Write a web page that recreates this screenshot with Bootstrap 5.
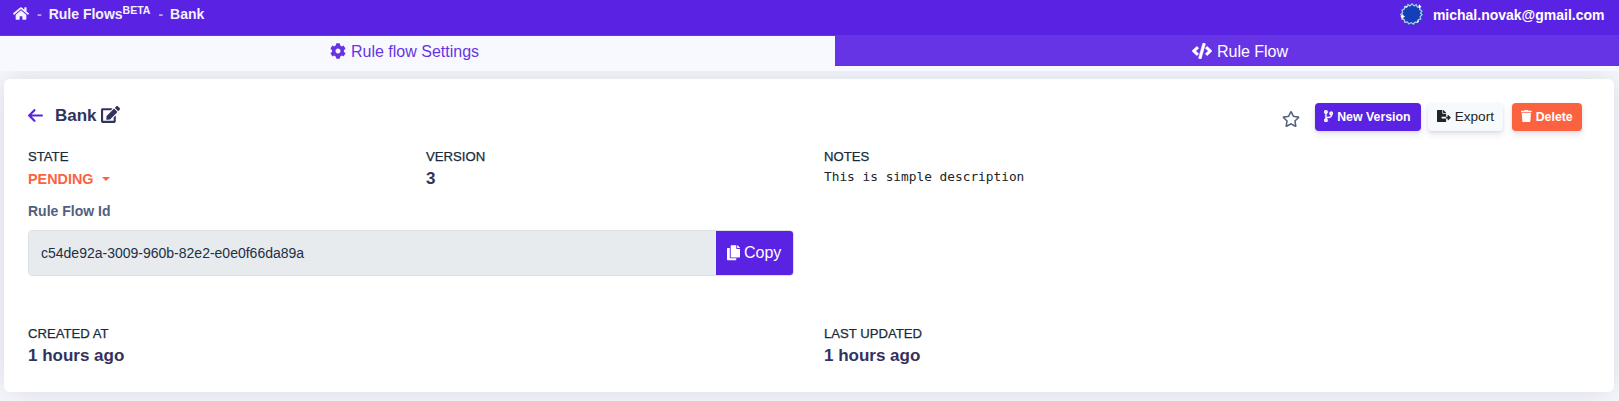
<!DOCTYPE html>
<html lang="en">
<head>
<meta charset="utf-8">
<meta name="viewport" content="width=device-width, initial-scale=1">
<title>Rule Flows - Bank</title>
<link href="https://cdn.jsdelivr.net/npm/bootstrap@5.3.0/dist/css/bootstrap.min.css" rel="stylesheet">
<style>
:root{--brand:#5a22e3;--brand-soft:#6734e5;--ink:#32325d;--danger:#fb6340}
body{font-family:"Liberation Sans",Arial,sans-serif;font-size:16px;color:#212f45;background:#f8f9fe;height:401px;overflow:hidden}
svg{fill:currentColor;display:block;flex:none}
.topbar{height:35px;background:var(--brand);padding:0 14.5px 0 13px;font-size:14px;font-weight:700;line-height:28px}
.topbar a{color:#f3f1fd;text-decoration:none}
.topbar sup{font-size:10.5px;line-height:0;top:-5px;vertical-align:baseline}
.crumb-sep{color:#b3a3ee;margin:0 7px 0 8px}
.home-icon{margin-top:6px}
.tabstrip{height:36px;background:#f8f9fe;position:relative;z-index:1}
.tabstrip a{height:31px;line-height:31px;color:var(--brand-soft);text-decoration:none;border-top:1px solid var(--brand-soft);gap:5px}
.tabstrip svg{margin-top:7px}
.tabstrip .tab-settings{width:835px;padding-right:26px}
.tabstrip .tab-flow{background:var(--brand-soft);color:#fff;padding-left:26px}
.flow-card{margin:8px 5px 0 4px;height:313px;border:0;border-radius:6px;padding:24px;box-shadow:0 0 32px rgba(80,84,105,.2)}
.flow-card .row{--bs-gutter-x:30px}
.title-line{height:28px}
.title-line h1{font-size:17px;font-weight:700;color:var(--ink);line-height:20px;margin:1px 5px 0 12px}
.btn-tool{height:28px;border:0;border-radius:4px;padding:0 9px;font-size:12.35px;font-weight:700;line-height:28px;box-shadow:0 4px 6px rgba(50,50,93,.11),0 1px 3px rgba(0,0,0,.08)}
.btn-tool svg{margin:7px 4px 0 0}
.btn-brand,.btn-brand:hover{background:var(--brand);color:#fff}
.btn-export{background:#f7fafc;color:#212529;font-size:13.6px;font-weight:400}
.btn-delete{background:var(--danger);color:#fff}
.cap-label{font-size:13.15px;line-height:20px;color:#172b3d;-webkit-text-stroke:.25px}
.strong-val{font-size:17px;font-weight:700;color:var(--ink);line-height:24px}
.state-pick{font-size:14.4px;font-weight:700;color:var(--danger);line-height:24px}
.state-pick::after{border-top-width:4px;border-left-width:4px;border-right-width:4px;margin-left:8px;vertical-align:3px}
.note-text{font-family:"DejaVu Sans Mono",monospace;font-size:12.8px;line-height:20px;color:#212529}
.id-label{font-size:14px;font-weight:700;color:#525f7f;line-height:20px}
.id-group{height:46px;border:1px solid #dbe0e5;border-radius:4px;overflow:hidden}
.id-group .form-control{background:#e7ebee;border:0;border-radius:0;font-size:14px;color:#212f45;padding:0 12px}
.id-group .btn{width:77px;border:0;border-radius:0;font-size:16px;line-height:44px;padding:0 0 0 11px}
</style>
</head>
<body>
<header class="topbar d-flex justify-content-between">
  <nav class="d-flex">
    <a href="#"><svg class="home-icon" width="16" height="15" viewBox="0 0 576 512"><path d="M280.37 148.26L96 300.11V464a16 16 0 0 0 16 16l112.06-.29a16 16 0 0 0 15.92-16V368a16 16 0 0 1 16-16h64a16 16 0 0 1 16 16v95.64a16 16 0 0 0 16 16.05L464 480a16 16 0 0 0 16-16V300L295.67 148.26a12.19 12.19 0 0 0-15.3 0zM571.6 251.47L488 182.56V44.05a12 12 0 0 0-12-12h-56a12 12 0 0 0-12 12v72.61L318.47 43a48 48 0 0 0-61 0L4.34 251.47a12 12 0 0 0-1.6 16.9l25.5 31A12 12 0 0 0 45.15 301l235.22-193.74a12.19 12.19 0 0 1 15.3 0L530.9 301a12 12 0 0 0 16.9-1.6l25.5-31a12 12 0 0 0-1.7-16.93z"/></svg></a>
    <span class="crumb-sep">-</span>
    <a href="#">Rule Flows<sup>BETA</sup></a>
    <span class="crumb-sep">-</span>
    <a href="#">Bank</a>
  </nav>
  <a href="#" class="d-flex text-white" style="line-height:30px">
    <svg width="24" height="24" viewBox="0 0 24 24" style="margin:2px 9px 0 0"><circle cx="12" cy="12" r="11.2" fill="#2a45c4"/><circle cx="12" cy="12" r="8.6" fill="#1340b8"/><path fill="none" stroke="#b3c9ea" stroke-width="1.2" d="M8 2.5l2 1.4 2-2 2.2 2 2-1.2 1.2 2.5 2.8-.3-.5 2.6 2.2 1.6-1.4 2 1.6 1.7-2 1.8.6 2.4-2.6.8-.6 2.5-2.6-.2-1.5 2-2.3-1.5-2.2 1.4-1.6-2-2.6.4-.4-2.6-2.6-1 .9-2.5-1.8-1.7 1.8-2-.6-2.4 2.3-1.1.4-2.6 2.8.2z"/><g fill="#fff"><path d="M1.5 13.5l1-1.5 1 1.5 1.5 1-1.5 1-1 1.5-1-1.5-1-1zM18.5 3.6l1.2-1.3.6 1.4 1.3.8-1.3.8-.9 1.3-.7-1.4zM5.2 4.6l1.3-.8.6 1.4-1.3 1zM17 19l1.6-.8.5 1.4-1.4 1z"/></g></svg>
    michal.novak@gmail.com
  </a>
</header>
<nav class="tabstrip d-flex align-items-start">
  <a href="#" class="tab-settings d-flex justify-content-center"><svg width="16" height="16" viewBox="0 0 512 512"><path d="M487.4 315.7l-42.6-24.6c4.3-23.2 4.3-47 0-70.2l42.6-24.6c4.9-2.8 7.1-8.6 5.5-14-11.1-35.6-30-67.8-54.7-94.6-3.8-4.1-10-5.1-14.8-2.3L380.8 110c-17.9-15.4-38.5-27.3-60.8-35.1V25.8c0-5.6-3.9-10.5-9.4-11.7-36.7-8.2-74.3-7.8-109.2 0-5.5 1.2-9.4 6.1-9.4 11.7V75c-22.2 7.9-42.8 19.8-60.8 35.1L88.7 85.5c-4.9-2.8-11-1.9-14.8 2.3-24.7 26.7-43.6 58.9-54.7 94.6-1.7 5.4.6 11.2 5.5 14L67.3 221c-4.3 23.2-4.3 47 0 70.2l-42.6 24.6c-4.9 2.8-7.1 8.6-5.5 14 11.1 35.6 30 67.8 54.7 94.6 3.8 4.1 10 5.1 14.8 2.3l42.6-24.6c17.9 15.4 38.5 27.3 60.8 35.1v49.2c0 5.6 3.9 10.5 9.4 11.7 36.7 8.2 74.3 7.8 109.2 0 5.5-1.2 9.4-6.1 9.4-11.7v-49.2c22.2-7.9 42.8-19.8 60.8-35.1l42.6 24.6c4.9 2.8 11 1.9 14.8-2.3 24.7-26.7 43.6-58.9 54.7-94.6 1.5-5.5-.7-11.3-5.6-14.1zM256 336c-44.1 0-80-35.9-80-80s35.9-80 80-80 80 35.9 80 80-35.9 80-80 80z"/></svg>Rule flow Settings</a>
  <a href="#" class="tab-flow d-flex flex-fill justify-content-center"><svg width="20" height="16" viewBox="0 0 640 512" stroke="currentColor" stroke-width="14"><path d="M278.9 511.5l-61-17.7c-6.4-1.8-10-8.5-8.2-14.9L346.2 8.7c1.8-6.4 8.5-10 14.9-8.2l61 17.7c6.4 1.8 10 8.5 8.2 14.9L293.8 503.3c-1.9 6.4-8.5 10.1-14.9 8.2zm-114-112.2l43.5-46.4c4.6-4.9 4.3-12.7-.8-17.2L117 256l90.6-79.7c5.1-4.5 5.5-12.3.8-17.2l-43.5-46.4c-4.5-4.8-12.1-5.1-17-.5L3.8 247.2c-5.1 4.7-5.1 12.8 0 17.5l144.1 135.1c4.9 4.6 12.5 4.4 17-.5zm327.2.6l144.1-135.1c5.1-4.7 5.1-12.8 0-17.5L492.1 112.1c-4.8-4.5-12.4-4.3-17 .5L431.6 159c-4.6 4.9-4.3 12.7.8 17.2L523 256l-90.6 79.7c-5.1 4.5-5.5 12.3-.8 17.2l43.5 46.4c4.5 4.9 12.1 5.1 17 .6z"/></svg>Rule Flow</a>
</nav>
<main class="card flow-card">
  <div class="title-line d-flex justify-content-between">
    <div class="d-flex align-items-center" style="margin-top:-4px">
      <svg width="15" height="17" viewBox="0 0 448 512" style="color:var(--brand)"><path d="M9.4 233.4c-12.5 12.5-12.5 32.8 0 45.3l160 160c12.5 12.5 32.8 12.5 45.3 0s12.5-32.8 0-45.3L109.2 288 416 288c17.7 0 32-14.3 32-32s-14.3-32-32-32l-306.7 0L214.6 118.6c12.5-12.5 12.5-32.8 0-45.3s-32.8-12.5-45.3 0l-160 160z"/></svg>
      <h1>Bank</h1>
      <svg width="19" height="17" viewBox="0 0 576 512" style="color:var(--ink);margin:-1px 0 0 -1px"><path d="M402.6 83.2l90.2 90.2c3.8 3.8 3.8 10 0 13.8L274.4 405.6l-92.8 10.3c-12.4 1.4-22.9-9.1-21.5-21.5l10.3-92.8L388.8 83.2c3.8-3.8 10-3.8 13.8 0zm162-22.9l-48.8-48.8c-15.2-15.2-39.9-15.2-55.2 0l-35.4 35.4c-3.8 3.8-3.8 10 0 13.8l90.2 90.2c3.8 3.8 10 3.8 13.8 0l35.4-35.4c15.2-15.3 15.2-40 0-55.2zM384 346.2V448H64V128h229.8c3.2 0 6.2-1.3 8.5-3.5l40-40c7.6-7.6 2.2-20.5-8.5-20.5H48C21.5 64 0 85.5 0 112v352c0 26.5 21.5 48 48 48h352c26.5 0 48-21.5 48-48V306.2c0-10.7-12.9-16-20.5-8.5l-40 40c-2.2 2.3-3.5 5.3-3.5 8.5z"/></svg>
    </div>
    <div class="d-flex" style="margin-right:8px">
      <svg width="18" height="16" viewBox="0 0 576 512" style="color:#525f7f;margin:8px 15px 0 0"><path d="M528.1 171.5L382 150.2 316.7 17.8c-11.7-23.6-45.6-23.9-57.4 0L194 150.2 47.9 171.5c-26.2 3.8-36.7 36.1-17.7 54.6l105.7 103-25 145.5c-4.5 26.3 23.2 46 46.4 33.7L288 439.6l130.7 68.7c23.2 12.2 50.9-7.4 46.4-33.7l-25-145.5 105.7-103c19-18.5 8.5-50.8-17.7-54.6zM388.6 312.3l23.7 138.4L288 385.4l-124.3 65.3 23.7-138.4-100.6-98 139-20.2 62.2-126 62.2 126 139 20.2-100.6 98z"/></svg>
      <button class="btn btn-tool btn-brand d-flex" style="width:106px"><svg width="9.2" height="12.3" viewBox="0 0 384 512" stroke="currentColor" stroke-width="14"><path d="M384 144c0-44.2-35.8-80-80-80s-80 35.8-80 80c0 36.4 24.3 67.1 57.5 76.8-.6 16.1-4.2 28.5-11 36.9-15.4 19.2-49.3 22.4-85.2 25.7-28.2 2.6-57.4 5.4-81.3 16.9v-144c32.5-10.2 56-40.5 56-76.3 0-44.2-35.8-80-80-80S0 35.8 0 80c0 35.8 23.5 66.1 56 76.3v199.3C23.5 365.9 0 396.2 0 432c0 44.2 35.8 80 80 80s80-35.8 80-80c0-34-21.2-63.1-51.2-74.6 3.1-5.2 7.8-9.8 14.9-13.4 16.2-8.2 40.4-10.4 66.1-12.8 42.2-3.9 90-8.4 118.2-43.4 14-17.4 21.1-39.8 21.6-67.9 31.6-10.8 54.4-40.7 54.4-75.9zM80 64c8.8 0 16 7.2 16 16s-7.2 16-16 16-16-7.2-16-16 7.2-16 16-16zm0 384c-8.8 0-16-7.2-16-16s7.2-16 16-16 16 7.2 16 16-7.2 16-16 16zm224-320c8.8 0 16 7.2 16 16s-7.2 16-16 16-16-7.2-16-16 7.2-16 16-16z"/></svg><span class="text-nowrap">New Version</span></button>
      <button class="btn btn-tool btn-export d-flex" style="width:75px;margin-left:7px"><svg width="13.7" height="12.2" viewBox="0 0 576 512"><path d="M384 121.9c0-6.3-2.5-12.4-7-16.9L279.1 7c-4.5-4.5-10.6-7-17-7H256v128h128zM571 308l-95.7-96.4c-10.1-10.1-27.4-3-27.4 11.3V288h-64v64h64v65.2c0 14.3 17.3 21.4 27.4 11.3L571 332c6.6-6.6 6.6-17.4 0-24zm-379 28v-32c0-8.8 7.2-16 16-16h176V160H248c-13.2 0-24-10.8-24-24V0H24C10.7 0 0 10.7 0 24v464c0 13.3 10.7 24 24 24h336c13.3 0 24-10.7 24-24V352H208c-8.8 0-16-7.2-16-16z"/></svg><span>Export</span></button>
      <button class="btn btn-tool btn-delete d-flex" style="width:70px;margin-left:9px"><svg width="10.7" height="12.2" viewBox="0 0 448 512"><path d="M432 32H312l-9.4-18.7A24 24 0 0 0 281.1 0H166.8a23.72 23.72 0 0 0-21.4 13.3L136 32H16A16 16 0 0 0 0 48v32a16 16 0 0 0 16 16h416a16 16 0 0 0 16-16V48a16 16 0 0 0-16-16zM53.2 467a48 48 0 0 0 47.9 45h245.8a48 48 0 0 0 47.9-45L416 128H32z"/></svg><span>Delete</span></button>
    </div>
  </div>
  <div class="row" style="margin-top:16px">
    <div class="col-3">
      <div class="cap-label">STATE</div>
      <div class="state-pick dropdown-toggle">PENDING</div>
    </div>
    <div class="col-3">
      <div class="cap-label">VERSION</div>
      <div class="strong-val">3</div>
    </div>
    <div class="col-6">
      <div class="cap-label">NOTES</div>
      <div class="note-text">This is simple description</div>
    </div>
  </div>
  <div class="row">
    <div class="col-6">
      <label class="id-label d-block" for="flowId" style="margin:10px 0 9px">Rule Flow Id</label>
      <div class="input-group id-group flex-nowrap">
        <input id="flowId" class="form-control" value="c54de92a-3009-960b-82e2-e0e0f66da89a" readonly>
        <button class="btn btn-brand d-flex"><svg width="13" height="15.5" viewBox="0 0 448 512" style="margin:14px 4px 0 0"><path d="M320 448v40c0 13.255-10.745 24-24 24H24c-13.255 0-24-10.745-24-24V120c0-13.255 10.745-24 24-24h72v296c0 30.879 25.121 56 56 56h168zm0-344V0H152c-13.255 0-24 10.745-24 24v368c0 13.255 10.745 24 24 24h272c13.255 0 24-10.745 24-24V128H344c-13.2 0-24-10.8-24-24zm120.971-31.029L375.029 7.029A24 24 0 0 0 358.059 0H352v96h96v-6.059a24 24 0 0 0-7.029-16.97z"/></svg>Copy</button>
      </div>
    </div>
  </div>
  <div class="row" style="margin-top:48px">
    <div class="col-6">
      <div class="cap-label">CREATED AT</div>
      <div class="strong-val">1 hours ago</div>
    </div>
    <div class="col-6">
      <div class="cap-label">LAST UPDATED</div>
      <div class="strong-val">1 hours ago</div>
    </div>
  </div>
</main>
<script src="https://cdn.jsdelivr.net/npm/bootstrap@5.3.0/dist/js/bootstrap.bundle.min.js"></script>
</body>
</html>
